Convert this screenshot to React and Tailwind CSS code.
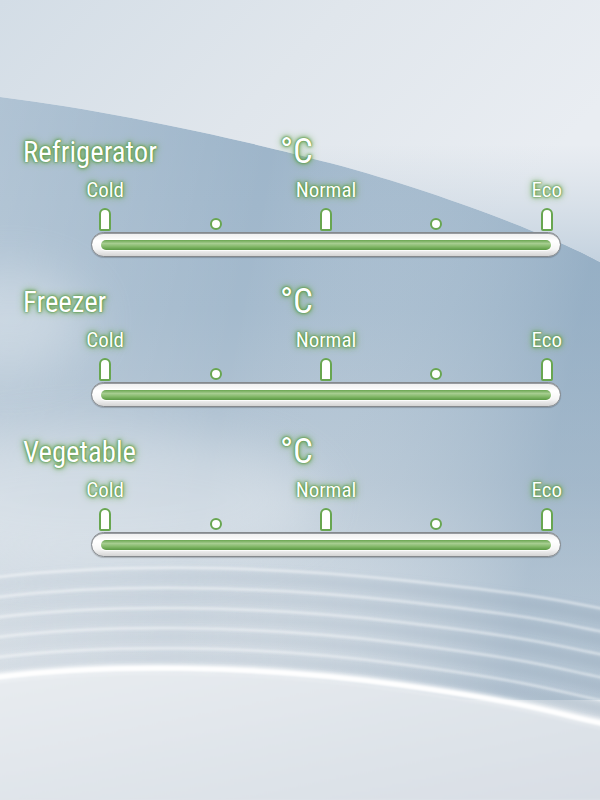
import React from "react";

const glow = "[text-shadow:0_0_1px_#4a8a34,0_0_3px_#55963f,0_0_5px_#65a350,0_0_9px_#82b66d]";

function Background() {
  const waves = [1, 2, 3, 4, 5];
  const wave = (k) => {
    const dy = -k * 20;
    const dr = -k * 23;
    return `M-10,${678 + dy} C100,${664 + dy} 250,${664 + dy} 400,${685 + dy * 1.05} S560,${716 + dr} 610,${725 + dr}`;
  };
  return (
    <svg className="absolute inset-0" width="600" height="800" viewBox="0 0 600 800">
      <defs>
        <linearGradient id="base" x1="0" y1="0" x2="0" y2="1">
          <stop offset="0" stopColor="#e2e8ee" />
          <stop offset="0.3" stopColor="#b5c7d7" />
          <stop offset="0.55" stopColor="#c8d4de" />
          <stop offset="0.72" stopColor="#d8e0e7" />
          <stop offset="1" stopColor="#e0e5ea" />
        </linearGradient>
        <linearGradient id="top" x1="0" y1="0" x2="1" y2="0.4">
          <stop offset="0" stopColor="#d3dde6" />
          <stop offset="0.5" stopColor="#e0e6ec" />
          <stop offset="1" stopColor="#e9edf2" />
        </linearGradient>
        <linearGradient id="topShade" x1="0" y1="0" x2="0" y2="1">
          <stop offset="0" stopColor="#ffffff" stopOpacity="0" />
          <stop offset="0.55" stopColor="#b9c9d7" stopOpacity="0" />
          <stop offset="1" stopColor="#abc0d2" stopOpacity="0.6" />
        </linearGradient>
        <linearGradient id="blue" x1="0" y1="0" x2="0" y2="1">
          <stop offset="0" stopColor="#9cb4c9" stopOpacity="1" />
          <stop offset="0.3" stopColor="#a4bacd" stopOpacity="1" />
          <stop offset="0.55" stopColor="#b7c7d5" stopOpacity="1" />
          <stop offset="0.75" stopColor="#cdd7e0" stopOpacity="0.6" />
          <stop offset="1" stopColor="#dde3e9" stopOpacity="0" />
        </linearGradient>
        <linearGradient id="blueH" x1="0" y1="0" x2="1" y2="0.2">
          <stop offset="0" stopColor="#ffffff" stopOpacity="0.2" />
          <stop offset="0.45" stopColor="#ffffff" stopOpacity="0" />
          <stop offset="1" stopColor="#85a2bb" stopOpacity="0.4" />
        </linearGradient>
        <linearGradient id="bottom" x1="0" y1="0" x2="1" y2="1">
          <stop offset="0" stopColor="#e8ecf0" />
          <stop offset="1" stopColor="#d8dee5" />
        </linearGradient>
        <linearGradient id="waveShade" x1="0" y1="0" x2="1" y2="0">
          <stop offset="0" stopColor="#aebccb" stopOpacity="0.15" />
          <stop offset="1" stopColor="#95a8ba" stopOpacity="0.45" />
        </linearGradient>
        <filter id="b1" x="-10%" y="-50%" width="120%" height="200%">
          <feGaussianBlur stdDeviation="1.3" />
        </filter>
        <filter id="b2" x="-10%" y="-50%" width="120%" height="200%">
          <feGaussianBlur stdDeviation="2.2" />
        </filter>
        <filter id="b3" x="-10%" y="-50%" width="120%" height="200%">
          <feGaussianBlur stdDeviation="4" />
        </filter>
        <filter id="b20" x="-50%" y="-50%" width="200%" height="200%">
          <feGaussianBlur stdDeviation="25" />
        </filter>
      </defs>
      <rect width="600" height="800" fill="url(#base)" />
      <path d="M0,97 C120,112 250,142 330,163 C450,195 560,240 600,262 V800 H0 Z" fill="url(#blue)" />
      <path d="M0,97 C120,112 250,142 330,163 C450,195 560,240 600,262 V700 H0 Z" fill="url(#blueH)" />
      <ellipse cx="10" cy="320" rx="80" ry="50" fill="#ffffff" opacity="0.3" filter="url(#b20)" />
      <ellipse cx="100" cy="500" rx="220" ry="70" fill="#ffffff" opacity="0.3" filter="url(#b20)" />
      <path d="M0,0 H600 V262 C560,240 450,195 330,163 C250,142 120,112 0,97 Z" fill="url(#top)" />
      <path d="M0,0 H600 V262 C560,240 450,195 330,163 C250,142 120,112 0,97 Z" fill="url(#topShade)" />
      {waves.map((k) => (
        <g key={k}>
          <path d={wave(k)} transform="translate(0,9)" stroke="url(#waveShade)" strokeWidth="12" fill="none" filter="url(#b3)" />
          <path d={wave(k)} stroke="#ffffff" strokeOpacity="0.5" strokeWidth="2.5" fill="none" filter="url(#b1)" />
        </g>
      ))}
      <path d={wave(0)} transform="translate(0,10)" stroke="url(#waveShade)" strokeWidth="14" fill="none" filter="url(#b3)" />
      <path d="M-10,682 C100,668 250,668 400,689 S560,720 610,729 V800 H-10 Z" fill="url(#bottom)" filter="url(#b1)" />
      <path d={wave(0)} stroke="#ffffff" strokeWidth="7" fill="none" filter="url(#b2)" />
      <path d={wave(0)} stroke="#ffffff" strokeWidth="3" fill="none" filter="url(#b1)" />
    </svg>
  );
}

function Marker({ type }) {
  if (type === "tall") {
    return <div className="w-[12px] h-[23px] bg-white border-2 border-[#68a650] rounded-t-[6px] rounded-b-[2px]" />;
  }
  return <div className="w-[12px] h-[12px] mb-[1px] bg-white border-2 border-[#68a650] rounded-full" />;
}

function Section({ title }) {
  return (
    <div className="flex flex-col h-[150px]">
      <div className="flex items-start h-[40px]">
        <div className={`w-[280px] pl-[23px] text-[28.7px] leading-[40px] text-white ${glow}`}>{title}</div>
        <div className={`text-[35px] leading-[40px] text-white ${glow}`}>°C</div>
      </div>
      <div className="mt-[6px] ml-[50px] w-[552px] grid grid-cols-5 h-[24px]">
        {["Cold", "", "Normal", "", "Eco"].map((l, i) => (
          <div key={i} className={`text-center text-[21px] leading-[24px] text-white ${glow}`}>{l}</div>
        ))}
      </div>
      <div className="mt-[6px] ml-[50px] w-[552px] grid grid-cols-5 h-[23px]">
        {["tall", "dot", "tall", "dot", "tall"].map((t, i) => (
          <div key={i} className="flex justify-center items-end">
            <Marker type={t} />
          </div>
        ))}
      </div>
      <div className="mt-[1px] ml-[91px] w-[470px] h-[25px] rounded-full border border-[#85898d] bg-[linear-gradient(#eeeeee,#ffffff_35%,#f6f6f6_70%,#d4d4d4)] shadow-[inset_0_1px_0_#979ba0,0_1px_1px_rgba(0,0,0,0.2)] flex items-center px-[9px] pt-[1px]">
        <div className="w-full h-[10px] rounded-full bg-[linear-gradient(#6aa651,#a6cd90_35%,#84b96a_65%,#5a9942)] shadow-[0_0_0_1px_rgba(255,255,255,0.8)]" />
      </div>
    </div>
  );
}

export default function App() {
  return (
    <div className="relative w-[600px] h-[800px] overflow-hidden font-['Roboto_Condensed','Liberation_Sans_Narrow',Roboto,sans-serif]">
      <Background />
      <div className="relative flex flex-col pt-[132px]">
        <Section title="Refrigerator" />
        <Section title="Freezer" />
        <Section title="Vegetable" />
      </div>
    </div>
  );
}
